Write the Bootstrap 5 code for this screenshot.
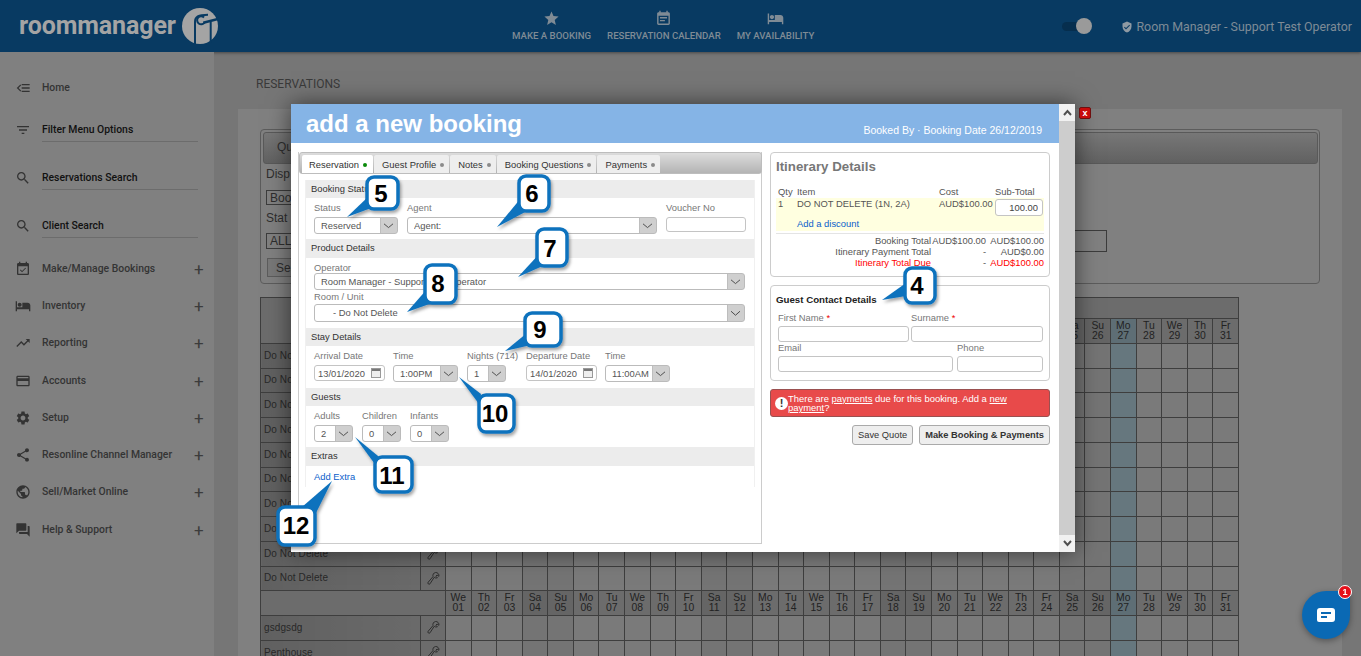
<!DOCTYPE html>
<html lang="en"><head><meta charset="utf-8"><title>add a new booking</title>
<link href="https://cdn.jsdelivr.net/npm/bootstrap@5.3.0/dist/css/bootstrap.min.css" rel="stylesheet">
<style>
html,body{height:656px;overflow:hidden}
body{background:#767676;font-family:"Liberation Sans",Arial,sans-serif;font-size:10px;position:relative}
.ibar{height:52px;background:#083a62;box-shadow:0 1px 3px rgba(0,0,0,.4);position:relative}
.logoword{font:700 25px Roboto,sans-serif;color:#a4a4a4;margin-left:19px;line-height:52px;width:160px;white-space:nowrap;letter-spacing:-.1px}
.topnav{position:absolute;left:512px;top:10px;gap:16px}
.topnav a{display:flex;flex-direction:column;align-items:center;font:500 9.65px Roboto,sans-serif;color:#7f8b95;text-decoration:none;text-transform:uppercase;line-height:12px}
.topnav svg{width:17px;height:17px;fill:#7f8b95;margin-bottom:3px}
.swtrack{width:28px;height:9px;border-radius:5px;background:#062e4e;position:absolute;left:1062px;top:22px}
.swknob{width:16px;height:16px;border-radius:50%;background:#9a9a9a;position:absolute;left:1076px;top:18px}
.whoami{position:absolute;right:9px;top:19px;font:400 12.4px/16px Roboto,sans-serif;color:#7e8b96;display:flex;align-items:center;gap:3px}
.whoami svg{width:12px;height:12px;fill:#8f9aa3}
.sidenav{width:214px;height:604px;background:#808080;flex:none;position:relative}
.snitem{position:absolute;left:0;width:214px;display:flex;align-items:center;height:20px;font:500 10.4px/20px Roboto,sans-serif;color:#343434}
.snitem svg{width:16px;height:16px;fill:#333;margin-left:15px;margin-right:11px;flex:none}
.snitem.dk{color:#111}
.snitem .pl{position:absolute;left:194px;font-size:17px;font-weight:400;color:#3c3c3c}
.snline{position:absolute;left:42px;width:156px;border-top:1px solid #6c6c6c}
.mainpane{flex:1;padding-left:24px;position:relative}
.pgtitle{font:400 12px/16px Roboto,sans-serif;color:#3a3a3a;padding:24px 0 17px 18px}
.graypanel{background:#808080;width:1104px;height:560px;padding:20px 0 0 22px}
.srchbox{width:1060px;height:155px;border:1px solid #5c5c5c;border-radius:4px;padding:2px 1px 0 2px;font-size:12px;color:#2e2e2e;line-height:14px}
.srchbar{height:32px;border:1px solid #595959;border-radius:3px;background:linear-gradient(#777,#616161);padding:3px 0 0 2px}
.qutab{display:inline-block;width:60px;height:25px;padding:4px 0 0 11px}
.srchbox .d1{padding:3px 0 0 3px}
.fakebox{border:1px solid #3c3c3c;height:15px;width:60px;margin:9px 0 0 3px;padding-left:3px;line-height:14px}
.seabtn{border:1px solid #5c5c5c;height:19px;width:60px;margin:6px 0 0 4px;padding:2px 0 0 8px;background:#787878;display:block}
.rbox{width:300px;height:22px;border:1px solid #3c3c3c;margin:5px 211px 0 auto}
.cal{border-collapse:collapse;table-layout:fixed;width:979px;margin-top:13px;color:#222}
.cal td{border:1px solid #3e3e3e;padding:0;height:24.75px;background:#7a7a7a;text-align:center;font-size:10.4px;line-height:10px}
.cal td.nm{background:linear-gradient(90deg,#606060,#6a6a6a);text-align:left;padding-left:3px;font-size:10px;color:#282828;white-space:nowrap;letter-spacing:.1px}
.cal td.wr{background:#6c6c6c}
.cal td.hd{background:#6c6c6c;color:#222}
.cal td.we{background:#747474}
.cal td.hd.we{background:#656565}
.cal td.tod{background:#66777e}
.cal td.hd.tod{background:#5e6e75}
.cal tr.rh td{height:21px;background:#6c6c6c}
.cal svg{width:13px;height:15px;display:block;margin:auto;fill:none;stroke:#2e2e2e;stroke-width:1}
.bkmodal{position:absolute;left:291px;top:104px;width:784px;height:448px;background:#fff;box-shadow:0 0 22px rgba(0,0,0,.55);display:flex;color:#555;font-size:9.4px}
.bkcol{width:768px;flex:none}
.bktitle{height:39px;background:#85b4e6;color:#fff;display:flex;justify-content:space-between;padding:0 17px 0 15px}
.bktitle h2{font:700 24px/39px "Liberation Sans",sans-serif;margin:0}
.bktitle span{font-size:10.5px;line-height:14px;padding-top:19px}
.sbar{width:16px;background:#cdcdcd;display:flex;flex-direction:column;justify-content:space-between}
.sbar i{display:flex;height:17px;background:#f1f1f1;align-items:center;justify-content:center}
.sbar svg{width:9px;height:7px;fill:none;stroke:#505050;stroke-width:2}
.lpanel{width:464px;height:392px;border:1px solid #ccc;border-top:0;position:relative}
.tabstrip{height:22px;margin:0 -1px 0 0;background:linear-gradient(#dcdcdc,#b4b4b4);border:1px solid #bdbdbd;border-radius:3px;display:flex;padding:2px 0 0 2px;gap:1px;position:relative}
.tabstrip b{font-weight:400;height:18px;line-height:17px;background:#eee;color:#333;padding:0 5px 0 8px;border-radius:2px 2px 0 0;display:flex;align-items:center;gap:4px;white-space:nowrap}
.tabstrip b.on{background:#fff;padding:0 6px 0 7px}
.tabstrip em{width:4px;height:4px;border-radius:50%;background:#8b8b8b;display:block;margin-top:2px}
.tabstrip b.on em{background:#0a8a0a}
.secwrap{margin:6px 6px 0;border:solid #f0f0f0;border-width:0 1px;height:307px}
.sechead{height:18px;line-height:17px;background:#ececec;padding-left:5px;color:#333}
.sechead.t{height:19px}
.secbody{padding:4px 0 0 8px;color:#777}
.flab{line-height:11px;height:11px;white-space:nowrap;color:#777}
.form-select.fsel,.form-control.ftxt{font:9.4px/14px "Liberation Sans",sans-serif;color:#555;border:1px solid #c4c4c4;border-radius:3px;height:17px;min-height:0;padding:0 18px 0 6px;box-shadow:none}
.form-select.fsel{background:#fff url("data:image/svg+xml,%3Csvg xmlns='http://www.w3.org/2000/svg' width='17' height='18'%3E%3Crect width='17' height='18' fill='%23cfcfcf'/%3E%3Cpath d='M0 0V18' stroke='%23aaa'/%3E%3Cpath d='M4 7l4.5 4.5 4.5-4.5' fill='none' stroke='%23444'/%3E%3C/svg%3E") right center/17px 100% no-repeat;border-color:#bbb}
.form-control.ftxt{padding:0 4px}
.form-control.fdate{background:#fff url("data:image/svg+xml,%3Csvg xmlns='http://www.w3.org/2000/svg' width='10' height='10'%3E%3Crect x='.5' y='.5' width='9' height='9' fill='%23eee' stroke='%23999'/%3E%3Crect x='1' y='1' width='8' height='2' fill='%23777'/%3E%3C/svg%3E") right 3px center no-repeat;padding:0 3px}
.gapb{gap:9px}
.w84{width:84px}.w250{width:250px}.w80{width:80px}.w431{width:431px}.w71{width:71px}.w65{width:65px}.w39{width:39px}
.nights{width:59px;margin:0 -8px 0 1px}
.rpanel{width:280px}
.rcard{border:1px solid #ccc;border-radius:4px;background:#fff;width:280px}
.itin{height:125px;padding:5px 6px 0 5px}
.itin h3{font:700 13.3px/18px "Liberation Sans",sans-serif;color:#777;margin:0 0 8px}
.itbl{width:268px;table-layout:fixed;border-collapse:collapse;line-height:11px}
.itbl th{font-weight:400;padding:0 0 1px 2px;line-height:11px;height:14px;vertical-align:bottom}
.itbl td{padding:0 0 0 2px;background:#ffffe0;vertical-align:top}
.itbl .ftxt{width:48px;height:17px;text-align:right;color:#444;margin-top:1px}
.itbl a,.addx{color:#0a5ecb;text-decoration:none}
.itrule{border-top:1px solid #e4e4e4;margin-top:2px;width:268px}
.totals{display:grid;grid-template-columns:155px 55px 58px;line-height:11px;text-align:right;margin-top:1px;width:268px;white-space:nowrap}
.totals .rd{color:#f00}
.contact{height:96px;margin-top:8px;padding:8px 6px 0 7px}
.contact h4{font:700 9.7px/12px "Liberation Sans",sans-serif;color:#222;margin:0 0 6px -2px}
.contact .flab{margin-bottom:2px;height:12px;line-height:12px}
.contact .ftxt{height:16px}
.req{color:#e00}
.warnbar{background:#e84a4a;border:1px solid #9a5050;border-radius:3px;color:#fff;height:28px;margin-top:8px;display:flex;align-items:center;padding:0 4px;line-height:9.5px;font-size:9.45px}
.warnbar u{color:#fff}
.warnbar i{width:13px;height:13px;background:#fff;border-radius:50%;color:#333;font:700 11px/13px "Liberation Sans",sans-serif;text-align:center;flex:none}
.btn.bgrey{font:9.3px/14px "Liberation Sans",sans-serif;color:#333;background:#eee;border:1px solid #aaa;border-radius:3px;height:20px;padding:0 5px}
.btn.bgrey.st{font-weight:700}
.xclose{position:absolute;left:1079px;top:107px;width:12px;height:12px;background:#c80a0a;border:1px solid #6f0f0f;border-radius:2px;color:#fff;font:700 9px/10px "Liberation Sans",sans-serif;text-align:center}
.callouts{position:absolute;left:0;top:0;width:1361px;height:656px;pointer-events:none}
.callouts text{font:700 24px "Liberation Sans",Arial,sans-serif;fill:#000;text-anchor:middle}
.callouts rect{fill:#fff;stroke:#0f72bd;stroke-width:3.5}
.callouts polygon{fill:#0f72bd}
.chatfab{position:fixed;left:1302px;top:591px;width:48px;height:48px;background:#0a69b4;border-radius:50% 0 50% 50%;box-shadow:0 2px 6px rgba(0,0,0,.35);display:flex;align-items:center;justify-content:center}
.chatdot{position:absolute;left:1338px;top:585px;width:14px;height:14px;background:#e5101a;border-radius:50%;border:1px solid #fff;color:#fff;font:700 9px/12px "Liberation Sans",sans-serif;text-align:center}
</style></head>
<body>
<header class="ibar d-flex">
  <div class="logoword">roommanager</div>
  <svg width="38" height="38" viewBox="0 0 38 38" style="margin:7px 0 0 2px"><circle cx="19" cy="19" r="18" fill="#a4a4a4"/><g fill="none" stroke="#083a62"><path d="M14 38V15C14 10 17 7.7 27 7.7" stroke-width="2"/><path d="M23 10.5a4 4 0 1 0 .5 5" stroke-width="2"/><path d="M22.3 15.7L38 11.7" stroke-width="2.5"/><path d="M29.7 15V36" stroke-width="2"/></g></svg>
  <nav class="topnav d-flex">
    <a href="#"><svg viewBox="0 0 24 24"><path d="M12 17.27L18.18 21l-1.64-7.03L22 9.24l-7.19-.61L12 2 9.19 8.63 2 9.24l5.46 4.73L5.82 21z"/></svg>Make a booking</a>
    <a href="#"><svg viewBox="0 0 24 24"><path d="M17 10H7v2h10v-2zm2-7h-1V1h-2v2H8V1H6v2H5c-1.11 0-1.99.9-1.99 2L3 19c0 1.1.89 2 2 2h14c1.1 0 2-.9 2-2V5c0-1.1-.9-2-2-2zm0 16H5V8h14v11zm-5-5H7v2h7v-2z"/></svg>Reservation Calendar</a>
    <a href="#"><svg viewBox="0 0 24 24"><path d="M7 13c1.66 0 3-1.34 3-3S8.66 7 7 7s-3 1.34-3 3 1.34 3 3 3zm12-6h-8v7H3V5H1v15h2v-3h18v3h2v-9c0-2.21-1.79-4-4-4z"/></svg>My Availability</a>
  </nav>
  <span class="swtrack"></span><span class="swknob"></span>
  <div class="whoami"><svg viewBox="0 0 24 24"><path d="M12 1L3 5v6c0 5.55 3.84 10.74 9 12 5.16-1.26 9-6.45 9-12V5l-9-4zm-2 16l-4-4 1.41-1.41L10 14.17l6.59-6.59L18 9l-8 8z"/></svg>Room Manager - Support Test Operator</div>
</header>
<div class="d-flex">
  <aside class="sidenav">
    <div class="snitem" style="top:26px"><svg viewBox="0 0 24 24"><path d="M10 6h12v2H10zM10 11h12v2H10zM10 16h12v2H10zM8 6.6L2.6 12 8 17.4l1.4-1.4L5.4 12l4-4z"/></svg>Home</div>
    <div class="snitem dk" style="top:68px"><svg viewBox="0 0 24 24"><path d="M10 18h4v-2h-4v2zM3 6v2h18V6H3zm3 7h12v-2H6v2z"/></svg>Filter Menu Options</div><div class="snline" style="top:89px"></div>
    <div class="snitem dk" style="top:116px"><svg viewBox="0 0 24 24"><path d="M15.5 14h-.79l-.28-.27C15.41 12.59 16 11.11 16 9.5 16 5.91 13.09 3 9.5 3S3 5.91 3 9.5 5.91 16 9.5 16c1.61 0 3.09-.59 4.23-1.57l.27.28v.79l5 4.99L20.49 19l-4.99-5zm-6 0C7.01 14 5 11.99 5 9.5S7.01 5 9.5 5 14 7.01 14 9.5 11.99 14 9.5 14z"/></svg>Reservations Search</div><div class="snline" style="top:137px"></div>
    <div class="snitem dk" style="top:164px"><svg viewBox="0 0 24 24"><path d="M15.5 14h-.79l-.28-.27C15.41 12.59 16 11.11 16 9.5 16 5.91 13.09 3 9.5 3S3 5.91 3 9.5 5.91 16 9.5 16c1.61 0 3.09-.59 4.23-1.57l.27.28v.79l5 4.99L20.49 19l-4.99-5zm-6 0C7.01 14 5 11.99 5 9.5S7.01 5 9.5 5 14 7.01 14 9.5 11.99 14 9.5 14z"/></svg>Client Search</div><div class="snline" style="top:185px"></div>
    <div class="snitem" style="top:207px"><svg viewBox="0 0 24 24"><path d="M16.53 11.06L15.47 10l-4.88 4.88-2.12-2.12-1.06 1.06L10.59 17l5.94-5.94zM19 3h-1V1h-2v2H8V1H6v2H5c-1.11 0-1.99.9-1.99 2L3 19c0 1.1.89 2 2 2h14c1.1 0 2-.9 2-2V5c0-1.1-.9-2-2-2zm0 16H5V8h14v11z"/></svg>Make/Manage Bookings<span class="pl">+</span></div>
    <div class="snitem" style="top:244px"><svg viewBox="0 0 24 24"><path d="M7 13c1.66 0 3-1.34 3-3S8.66 7 7 7s-3 1.34-3 3 1.34 3 3 3zm12-6h-8v7H3V5H1v15h2v-3h18v3h2v-9c0-2.21-1.79-4-4-4z"/></svg>Inventory<span class="pl">+</span></div>
    <div class="snitem" style="top:281px"><svg viewBox="0 0 24 24"><path d="M16 6l2.29 2.29-4.88 4.88-4-4L2 16.59 3.41 18l6-6 4 4 6.3-6.29L22 12V6z"/></svg>Reporting<span class="pl">+</span></div>
    <div class="snitem" style="top:319px"><svg viewBox="0 0 24 24"><path d="M20 4H4c-1.11 0-1.99.89-1.99 2L2 18c0 1.11.89 2 2 2h16c1.11 0 2-.89 2-2V6c0-1.11-.89-2-2-2zm0 14H4v-6h16v6zm0-10H4V6h16v2z"/></svg>Accounts<span class="pl">+</span></div>
    <div class="snitem" style="top:356px"><svg viewBox="0 0 24 24"><path d="M19.14 12.94c.04-.3.06-.61.06-.94 0-.32-.02-.64-.07-.94l2.03-1.58c.18-.14.23-.41.12-.61l-1.92-3.32c-.12-.22-.37-.29-.59-.22l-2.39.96c-.5-.38-1.03-.7-1.62-.94l-.36-2.54c-.04-.24-.24-.41-.48-.41h-3.84c-.24 0-.43.17-.47.41l-.36 2.54c-.59.24-1.13.57-1.62.94l-2.39-.96c-.22-.08-.47 0-.59.22L2.74 8.87c-.12.21-.08.47.12.61l2.03 1.58c-.05.3-.09.63-.09.94s.02.64.07.94l-2.03 1.58c-.18.14-.23.41-.12.61l1.92 3.32c.12.22.37.29.59.22l2.39-.96c.5.38 1.03.7 1.62.94l.36 2.54c.05.24.24.41.48.41h3.84c.24 0 .44-.17.47-.41l.36-2.54c.59-.24 1.13-.56 1.62-.94l2.39.96c.22.08.47 0 .59-.22l1.92-3.32c.12-.22.07-.47-.12-.61l-2.01-1.58zM12 15.6c-1.98 0-3.6-1.62-3.6-3.6s1.62-3.6 3.6-3.6 3.6 1.62 3.6 3.6-1.62 3.6-3.6 3.6z"/></svg>Setup<span class="pl">+</span></div>
    <div class="snitem" style="top:393px"><svg viewBox="0 0 24 24"><path d="M18 16.08c-.76 0-1.44.3-1.96.77L8.91 12.7c.05-.23.09-.46.09-.7s-.04-.47-.09-.7l7.05-4.11c.54.5 1.25.81 2.04.81 1.66 0 3-1.34 3-3s-1.34-3-3-3-3 1.34-3 3c0 .24.04.47.09.7L8.04 9.81C7.5 9.31 6.79 9 6 9c-1.66 0-3 1.34-3 3s1.34 3 3 3c.79 0 1.5-.31 2.04-.81l7.12 4.16c-.05.21-.08.43-.08.65 0 1.61 1.31 2.92 2.92 2.92 1.61 0 2.92-1.31 2.92-2.92s-1.31-2.92-2.92-2.92z"/></svg>Resonline Channel Manager<span class="pl">+</span></div>
    <div class="snitem" style="top:430px"><svg viewBox="0 0 24 24"><path d="M12 2C6.48 2 2 6.48 2 12s4.48 10 10 10 10-4.48 10-10S17.52 2 12 2zm-1 17.93c-3.95-.49-7-3.85-7-7.93 0-.62.08-1.21.21-1.79L9 15v1c0 1.1.9 2 2 2v1.93zm6.9-2.54c-.26-.81-1-1.39-1.9-1.39h-1v-3c0-.55-.45-1-1-1H8v-2h2c.55 0 1-.45 1-1V7h2c1.1 0 2-.9 2-2v-.41c2.93 1.19 5 4.06 5 7.41 0 2.08-.8 3.97-2.1 5.39z"/></svg>Sell/Market Online<span class="pl">+</span></div>
    <div class="snitem" style="top:468px"><svg viewBox="0 0 24 24"><path d="M21 6h-2v9H6v2c0 .55.45 1 1 1h11l4 4V7c0-.55-.45-1-1-1zm-4 6V3c0-.55-.45-1-1-1H3c-.55 0-1 .45-1 1v14l4-4h10c.55 0 1-.45 1-1z"/></svg>Help &amp; Support<span class="pl">+</span></div>
  </aside>
  <main class="mainpane">
    <div class="pgtitle">RESERVATIONS</div>
    <div class="graypanel">
      <div class="srchbox">
        <div class="srchbar"><span class="qutab">Qu</span></div>
        <div class="d1">Disp</div>
        <div class="fakebox">Boo</div>
        <div class="d1" style="padding-top:6px">Stat</div>
        <div class="d-flex align-items-start"><div class="fakebox" style="height:16px;margin-top:8px">ALL</div><div class="rbox"></div></div>
        <span class="seabtn">Sea</span>
      </div>
      <table class="cal" id="cal"></table>
    </div>
  </main>
</div>

<section class="bkmodal">
  <div class="bkcol">
    <div class="bktitle"><h2>add a new booking</h2><span>Booked By · Booking Date 26/12/2019</span></div>
    <div class="d-flex" style="padding:9px 0 0 7px;gap:8px">
      <div class="lpanel">
        <div class="tabstrip"><b class="on">Reservation<em></em></b><b>Guest Profile<em></em></b><b>Notes<em></em></b><b>Booking Questions<em></em></b><b>Payments<em></em></b></div>
        <div class="secwrap">
          <div class="sechead">Booking Status</div>
          <div class="secbody d-flex gapb" style="padding-top:4px;height:41px">
            <div class="w84"><div class="flab" style="margin-bottom:4px">Status</div><select class="form-select fsel"><option>Reserved</option></select></div>
            <div class="w250"><div class="flab" style="margin-bottom:4px">Agent</div><select class="form-select fsel"><option>Agent:</option></select></div>
            <div class="w80"><div class="flab" style="margin-bottom:4px">Voucher No</div><input class="form-control ftxt" style="height:15px"></div>
          </div>
          <div class="sechead t">Product Details</div>
          <div class="secbody" style="height:70px">
            <div class="flab">Operator</div><select class="form-select fsel w431"><option>Room Manager - Support Test Operator</option></select>
            <div class="flab" style="margin:1px 0 2px">Room / Unit</div><select class="form-select fsel w431" style="height:18px;padding-left:18px"><option>- Do Not Delete</option></select>
          </div>
          <div class="sechead">Stay Details</div>
          <div class="secbody d-flex" style="gap:8px;height:42px">
            <div class="w71"><div class="flab" style="margin-bottom:4px">Arrival Date</div><input class="form-control ftxt fdate" style="height:16px" value="13/01/2020"></div>
            <div class="w65"><div class="flab" style="margin-bottom:4px">Time</div><select class="form-select fsel"><option>1:00PM</option></select></div>
            <div class="nights"><div class="flab" style="margin-bottom:4px">Nights (714)</div><select class="form-select fsel w39"><option>1</option></select></div>
            <div class="w71"><div class="flab" style="margin-bottom:4px">Departure Date</div><input class="form-control ftxt fdate" style="height:16px" value="14/01/2020"></div>
            <div class="w65"><div class="flab" style="margin-bottom:4px">Time</div><select class="form-select fsel"><option>11:00AM</option></select></div>
          </div>
          <div class="sechead">Guests</div>
          <div class="secbody d-flex gapb" style="height:41px">
            <div class="w39"><div class="flab" style="margin-bottom:4px">Adults</div><select class="form-select fsel"><option>2</option></select></div>
            <div class="w39"><div class="flab" style="margin-bottom:4px">Children</div><select class="form-select fsel"><option>0</option></select></div>
            <div class="w39"><div class="flab" style="margin-bottom:4px">Infants</div><select class="form-select fsel"><option>0</option></select></div>
          </div>
          <div class="sechead t">Extras</div>
          <div class="secbody" style="padding-top:4px"><a href="#" class="addx">Add Extra</a></div>
        </div>
      </div>
      <div class="rpanel">
        <div class="rcard itin">
          <h3>Itinerary Details</h3>
          <table class="itbl">
            <colgroup><col style="width:19px"><col style="width:142px"><col style="width:56px"><col style="width:51px"></colgroup>
            <tr><th>Qty</th><th>Item</th><th>Cost</th><th>Sub-Total</th></tr>
            <tr><td style="height:33px">1</td><td>DO NOT DELETE (1N, 2A)<div style="height:9px"></div><a href="#">Add a discount</a></td><td>AUD$100.00</td><td><input class="form-control ftxt" value="100.00"></td></tr>
          </table>
          <div class="itrule"></div>
          <div class="totals"><span>Booking Total</span><span>AUD$100.00</span><span>AUD$100.00</span><span>Itinerary Payment Total</span><span>-</span><span>AUD$0.00</span><span class="rd">Itinerary Total Due</span><span>-</span><span class="rd">AUD$100.00</span></div>
        </div>
        <div class="rcard contact">
          <h4>Guest Contact Details</h4>
          <div class="d-flex" style="gap:2px">
            <div style="width:131px"><div class="flab">First Name <span class="req">*</span></div><input class="form-control ftxt"></div>
            <div style="width:132px"><div class="flab">Surname <span class="req">*</span></div><input class="form-control ftxt"></div>
          </div>
          <div class="d-flex" style="gap:4px">
            <div style="width:175px"><div class="flab">Email</div><input class="form-control ftxt"></div>
            <div style="width:86px"><div class="flab">Phone</div><input class="form-control ftxt"></div>
          </div>
        </div>
        <div class="warnbar"><i>!</i><span>There are <u>payments</u> due for this booking. Add a <u>new payment</u>?</span></div>
        <div class="d-flex justify-content-end" style="gap:6px;margin-top:8px"><button class="btn bgrey">Save Quote</button><button class="btn bgrey st">Make Booking &amp; Payments</button></div>
      </div>
    </div>
  </div>
  <div class="sbar"><i><svg viewBox="0 0 9 7"><path d="M1 6l3.5-4L8 6"/></svg></i><i><svg viewBox="0 0 9 7"><path d="M1 1l3.5 4L8 1"/></svg></i></div>
</section>
<div class="xclose">x</div>

<svg class="callouts" viewBox="0 0 1361 656">
  <defs><filter id="sh" x="-30%" y="-30%" width="170%" height="170%"><feDropShadow dx="1.5" dy="2.5" stdDeviation="1.5" flood-color="#000" flood-opacity=".35"/></filter></defs>
  <g filter="url(#sh)"><polygon points="347,217 369,196 374,207"/><rect x="367" y="177" width="31" height="32" rx="7"/></g><text x="381" y="202">5</text>
  <g filter="url(#sh)"><polygon points="497,227 521,198 527,211"/><rect x="519" y="176" width="30" height="35" rx="7"/></g><text x="532" y="202">6</text>
  <g filter="url(#sh)"><polygon points="518,277 541,252 545,265"/><rect x="537" y="229" width="30" height="37" rx="7"/></g><text x="550" y="257">7</text>
  <g filter="url(#sh)"><polygon points="407,312 428,288 435,302"/><rect x="425" y="265" width="31" height="38" rx="7"/></g><text x="438" y="292">8</text>
  <g filter="url(#sh)"><polygon points="505,351 527,333 531,345"/><rect x="525" y="313" width="36" height="33" rx="7"/></g><text x="540" y="338">9</text>
  <g filter="url(#sh)"><polygon points="459,377 481,394 479,404"/><rect x="479" y="395" width="35" height="37" rx="7"/></g><text x="495" y="422">10</text>
  <g filter="url(#sh)"><polygon points="355,437 378,456 377,467"/><rect x="375" y="457" width="37" height="35" rx="7"/></g><text x="392" y="484">11</text>
  <g filter="url(#sh)"><polygon points="332,481 302,507 314,517"/><rect x="278" y="507" width="37" height="38" rx="7"/></g><text x="296" y="534">12</text>
  <g filter="url(#sh)"><polygon points="882,300 906,283 906,296"/><rect x="905" y="268" width="30" height="35" rx="7"/></g><text x="917" y="294">4</text>
</svg>

<div class="chatfab"><svg width="20" height="16" viewBox="0 0 20 16"><path d="M4 1h12a3 3 0 0 1 3 3v8a3 3 0 0 1-3 3H3a2 2 0 0 1-2-2V4a3 3 0 0 1 3-3z" fill="#fff"/><path d="M5 6h10M5 10h6" stroke="#0a69b4" stroke-width="2"/></svg></div>
<div class="chatdot">1</div>

<script>
var wd=['We','Th','Fr','Sa','Su','Mo','Tu'];
function cols(){var s='<colgroup><col style="width:160px"><col style="width:25px">';for(var i=0;i<31;i++)s+='<col>';return s+'</colgroup>';}
function cls(i){var c=(i%7==3||i%7==4)?' we':'';if(i==26)c=' tod';return c;}
function dates(){var s='';for(var i=0;i<31;i++){var d=i+1;s+='<td class="hd'+cls(i)+'">'+wd[i%7]+'<br>'+(d<10?'0'+d:d)+'</td>';}return s;}
var wrench='<svg viewBox="0 0 13 15"><path d="M8.5 1.5a3.2 3.2 0 0 1 3.4 3.8L10 4 8.8 5.2l1.6 1.6a3.2 3.2 0 0 1-3.2-.5L3 12.8a1.2 1.2 0 0 1-1.8-1.6L6 5.6a3.2 3.2 0 0 1 2.5-4.1z"/></svg>';
function row(n){var s='<tr><td class="nm">'+n+'</td><td class="wr">'+wrench+'</td>';for(var i=0;i<31;i++)s+='<td class="'+cls(i)+'"></td>';return s+'</tr>';}
var h=cols()+'<tr class="rh"><td colspan="2" rowspan="2" style="background:#6c6c6c"></td><td colspan="31"></td></tr><tr>'+dates()+'</tr>';
for(var r=0;r<10;r++)h+=row('Do Not Delete');
h+='<tr><td colspan="2" class="hd"></td>'+dates()+'</tr>'+row('gsdgsdg')+row('Penthouse');
document.getElementById('cal').innerHTML=h;
</script>
</body></html>
